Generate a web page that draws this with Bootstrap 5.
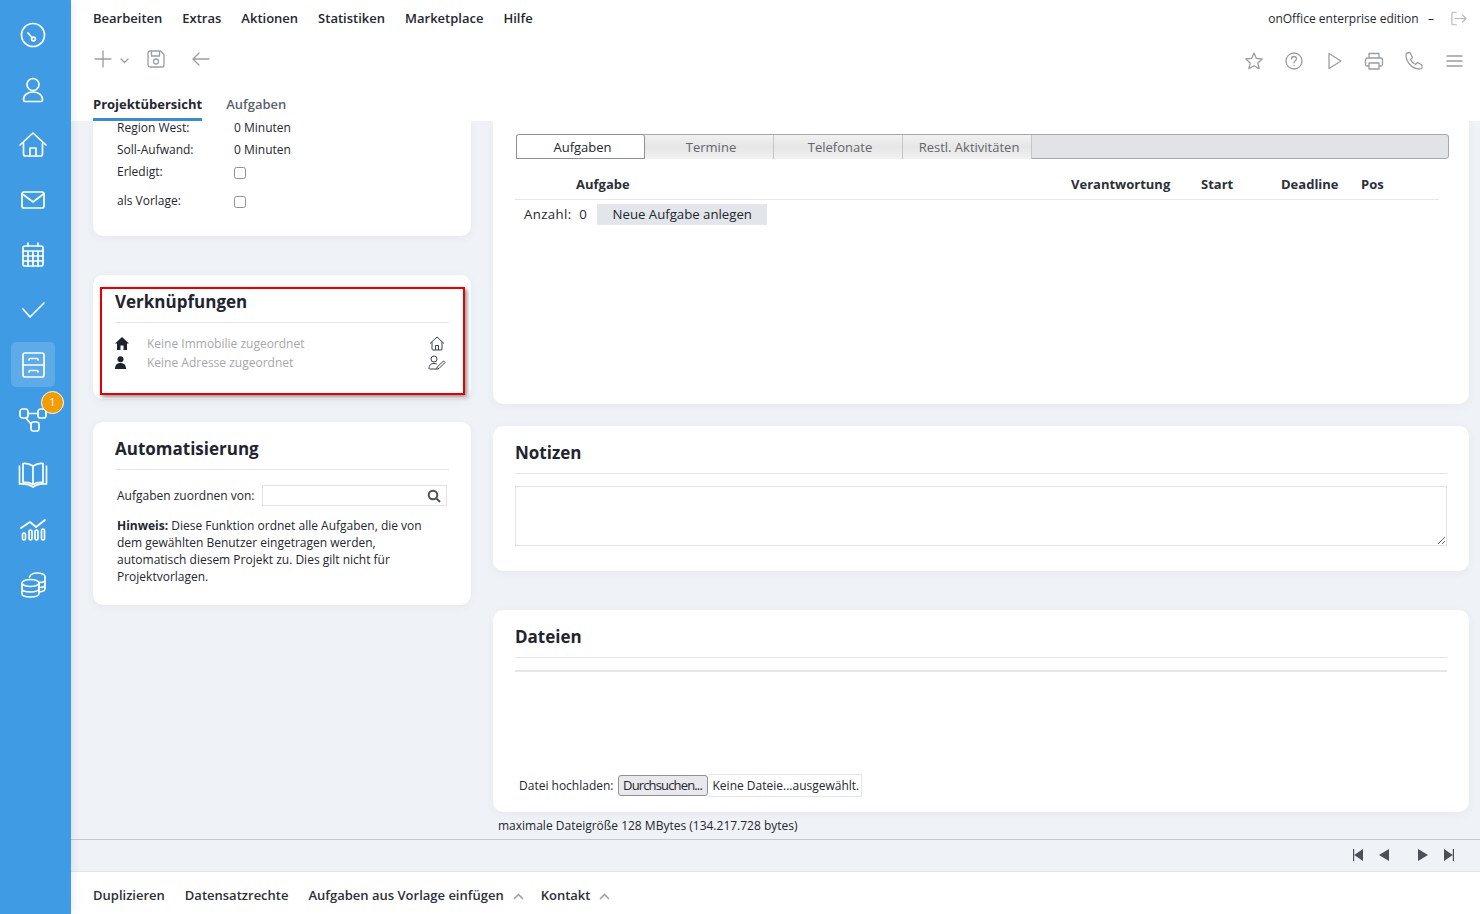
<!DOCTYPE html>
<html lang="de"><head><meta charset="utf-8"><title>Projekt</title>
<link href="https://cdn.jsdelivr.net/npm/bootstrap@5.3.0/dist/css/bootstrap.min.css" rel="stylesheet">
<style>
html,body{height:100%;overflow:hidden}
body{font-family:"Open Sans",sans-serif;font-size:13px;color:#23272f;background:#eff2f6;line-height:17px}
.shell{height:914px}
.side{width:71px;background:#3f9be3;flex:none;padding-top:7px;box-shadow:2px 0 8px rgba(60,70,90,.10);z-index:2}
.side-item{height:55px;position:relative;padding:13px 0 0 18px}
.side-item svg{fill:none;stroke:#fff;stroke-width:1.7;stroke-linecap:round;stroke-linejoin:round;position:relative;display:block}
.side-item.on::before{content:"";position:absolute;left:11px;top:5px;width:44px;height:45px;border-radius:5px;background:#5dabe8}
.pip{position:absolute;left:41px;top:-1px;width:23px;height:23px;border-radius:50%;background:#f29c06;border:1.5px solid #fff;color:#fff;font-size:11px;line-height:20px;text-align:center}
.head{height:121px;background:#fff;flex:none;padding-left:22px}
.menu-row{height:36px;padding-right:13px}
.menu-row a,.foot a,.tabtop a{color:inherit;text-decoration:none}
.menu-item{font-weight:600;color:#2b3038;margin-right:20px;font-size:13px}
.ed{font-size:12px;margin-right:17px}
.tool-row{height:46px;padding-right:16px;padding-left:1px}
.tool-row svg,.menu-row svg{fill:none;stroke:#9a9da6;stroke-width:1.3;stroke-linecap:round;stroke-linejoin:round;display:block}
.right-tools{gap:20px;margin-top:4px}
.tabtop{height:39px;gap:24px}
.tabtop a{font-weight:600;color:#5b616b;padding-top:14px;height:39px}
.tabtop a.act{color:#23272f;font-weight:700;border-bottom:3px solid #3a8ccf}
.scroller{flex:1 1 auto;min-height:0;overflow:hidden;padding-left:22px;padding-right:11px;gap:22px}
.lcol{width:378px;flex:none}
.rcol{flex:1 1 auto;min-width:0}
.pane{background:#fff;border-radius:10px;box-shadow:0 2px 10px rgba(60,70,90,.06);position:relative}
.pane.cut{border-radius:0 0 10px 10px}
.ttl{font-size:17px;font-weight:700;color:#1f2530;line-height:22px;margin:0;padding:0 0 9px;border-bottom:1px solid #e3e5e9}
.kv{font-size:12px;color:#23272f;height:22px;padding-left:24px;align-items:center}
.kv.first{height:14px;line-height:14px;margin-bottom:3px}
.kv .k{width:117px}
.cb{width:12px;height:12px;border:1px solid #8f8f9d;border-radius:2.5px;background:#fff;display:block;margin-top:2px}
.muted-row{color:#a5a7ab;font-size:12px;height:19px}
.redbox{position:absolute;left:7px;top:12px;width:365px;height:108px;border:2px solid #e60000;box-shadow:2px 2px 4px rgba(0,0,0,.45);pointer-events:none}
.zuord{font-size:12px;padding-left:2px}
.finput{width:185px;height:21px;border:1px solid #e0e2e6;position:relative;margin-right:2px}
.hint{font-size:12px;line-height:17px;padding-left:2px;margin:0;max-width:318px}
.strip{height:25px;border:1px solid #a6a8ab;border-radius:3px;background:#e1e3e6;margin-left:23px;margin-right:20px}
.stab{width:129px;height:24px;padding-left:4px;text-align:center;line-height:24px;color:#62666c;border-right:1px solid #c4c6c9;background:linear-gradient(#f1f1f1,#e6e6e6 50%,#f1f1f1)}
.stab.act{background:#fff;color:#23272f;border:1px solid #8e9094;border-radius:3px 3px 0 0;margin:-1px 0 -1px -1px;height:25px}
.thead{height:24px;margin:17px 30px 0 22px;border-bottom:1px solid #e3e5e9;color:#2b3038;font-size:13px}
.thead span{display:block;flex:none;font-weight:700}
.cnt{font-size:13.2px;letter-spacing:.4px}
.new-task{background:#e2e5ea;border:0;font-size:13.2px;letter-spacing:0;height:21px;width:170px;padding:0;color:#23272f;margin-left:10px}
.nt{width:932px;height:60px;border:1px solid #e0e2e6;display:block;margin-top:12px;outline:0}
.doub{height:2px;background:#e4e6ea;margin-top:12px}
.browse{height:21px;width:90px;border:1px solid #8f8f9d;border-radius:3px;background:#e9e9ed;font-size:13px;letter-spacing:-.85px;padding:0;color:#23272f}
.fname{border:1px solid #e4e6ea;border-left:0;height:23px;width:154px;line-height:21px;padding-left:5px;white-space:nowrap;font-size:12px}
.maxs{font-size:12px;padding:5px 0 0 5px;line-height:17px}
.navbar-b{height:33px;flex:none;border-top:1px solid #c6cacf;border-bottom:1px solid #e3e5e9;background:#eff2f6;padding:0 26px 2px 0}
.navbar-b svg{fill:#4a4f58;display:block}
.foot{height:42px;flex:none;background:#fff;padding:4px 0 0 22px;font-weight:600;gap:20px;color:#2b3038}
.foot svg{fill:none;stroke:#9a9da6;stroke-width:1.5;margin:3px 0 0 9px}
</style></head><body>
<div class="shell d-flex">
<nav class="side">
<div class="side-item"><svg width="30" height="30" viewBox="0 0 30 30"><circle cx="15" cy="15" r="11.5"/><path d="M10 13l4 4.500"/><circle cx="15.500" cy="19" r="1.900"/></svg></div>
<div class="side-item"><svg width="30" height="30" viewBox="0 0 30 30"><circle cx="15" cy="9.500" r="6"/><path d="M5.500 25c0-5 4-8 9.500-8s9.500 3 9.500 8c0 1-.5 1.500-1.500 1.500H7c-1 0-1.500-.5-1.500-1.500z"/></svg></div>
<div class="side-item"><svg width="30" height="30" viewBox="0 0 30 30"><path d="M2 15L15 3l13 12M5.500 13v11a2 2 0 0 0 2 2h15a2 2 0 0 0 2-2V13"/><path d="M12 26v-8h6v8"/></svg></div>
<div class="side-item"><svg width="30" height="30" viewBox="0 0 30 30"><rect x="4" y="7" width="22" height="16" rx="2"/><path d="M4.500 9L15 17 25.500 9"/></svg></div>
<div class="side-item"><svg width="30" height="30" viewBox="0 0 30 30"><rect x="5" y="6" width="20" height="20" rx="2"/><path d="M5 11h20M5 16h20M5 21h20M10 11v15M15 11v15M20 11v15M10 3v3M20 3v3"/></svg></div>
<div class="side-item"><svg width="30" height="30" viewBox="0 0 30 30"><path d="M5 14l7 8L26 8"/></svg></div>
<div class="side-item on"><svg width="30" height="30" viewBox="0 0 30 30"><rect x="5" y="3" width="21" height="24" rx="2"/><path d="M5 15h21M11 10c0-1 .5-1.500 1-1.500h7c.5 0 1 .5 1 1.500M11 22c0-1 .5-1.500 1-1.500h7c.5 0 1 .5 1 1.500"/></svg></div>
<div class="side-item"><svg width="30" height="30" viewBox="0 0 30 30"><rect x="2" y="4" width="8" height="9" rx="2.500"/><rect x="20" y="4" width="8" height="9" rx="2.500"/><rect x="13" y="17" width="8" height="9" rx="2.500"/><path d="M10 8.500h10M8 13l5 6"/></svg><span class="pip">1</span></div>
<div class="side-item"><svg width="30" height="30" viewBox="0 0 30 30"><path d="M15 6C12 4 8 3 5 3.500v19C8 22 12 22.500 15 24.500c3-2 7-2.500 10-2v-19C22 3 18 4 15 6zM15 6v18.500"/><path d="M1.500 6v18c4.500-.5 9.500 0 13.500 3 4-3 9-3.500 13.500-3V6"/></svg></div>
<div class="side-item"><svg width="30" height="30" viewBox="0 0 30 30"><path d="M3 13l9-6 6 5 9-7"/><rect x="4.500" y="18" width="3" height="7" rx="1.500"/><rect x="11" y="15" width="3" height="10" rx="1.500"/><rect x="17" y="15" width="3" height="10" rx="1.500"/><rect x="23.500" y="14" width="3" height="11" rx="1.500"/></svg></div>
<div class="side-item"><svg width="30" height="30" viewBox="0 0 30 30"><ellipse cx="12.500" cy="13" rx="8.500" ry="3.500"/><path d="M4 13v10.500c0 2 3.500 3.500 8.500 3.500s8.500-1.500 8.500-3.500V13M4 18.500c0 2 3.500 3.500 8.500 3.500s8.500-1.500 8.500-3.500"/><path d="M11.500 7c1-2.500 4-4 7.500-4 4.500 0 8 1.500 8 3.500V19c0 1.500-2 2.500-6 3M21 12.500c3 0 6-1 6-2.500M21 17.500c3 0 6-1 6-2.500"/></svg></div>
</nav>
<div class="flex-grow-1 d-flex flex-column" style="min-width:0">
<header class="head">
<div class="menu-row d-flex align-items-center">
<a class="menu-item" href="#">Bearbeiten</a><a class="menu-item" href="#">Extras</a><a class="menu-item" href="#">Aktionen</a><a class="menu-item" href="#">Statistiken</a><a class="menu-item" href="#">Marketplace</a><a class="menu-item" href="#">Hilfe</a>
<span class="ms-auto ed">onOffice enterprise edition&nbsp;&nbsp; –</span>
<svg width="16" height="15" viewBox="0 0 18 16" style="stroke:#b5b8be"><path d="M6 1H2.500A1.500 1.500 0 0 0 1 2.500v11A1.500 1.500 0 0 0 2.500 15H6M5 8h12M13 4l4 4-4 4"/></svg>
</div>
<div class="tool-row d-flex align-items-center">
<svg width="18" height="18" viewBox="0 0 18 18" style="margin-right:8px"><path d="M9 1v16M1 9h16"/></svg>
<svg width="9" height="6" viewBox="0 0 9 6" style="margin-right:18px;margin-top:4px"><path d="M1 1l3.500 3.500L8 1"/></svg>
<svg width="18" height="18" viewBox="0 0 18 18" style="margin-right:27px"><path d="M2.500 1h11L17 4.500V15a2 2 0 0 1-2 2H3a2 2 0 0 1-2-2V3a2 2 0 0 1 1.500-2zM4.500 1v5h8V1"/><circle cx="9" cy="11.500" r="2.500"/></svg>
<svg width="18" height="14" viewBox="0 0 18 14"><path d="M7 1L1 7l6 6M1 7h16"/></svg>
<div class="ms-auto d-flex right-tools">
<svg width="20" height="20" viewBox="0 0 20 20"><path d="M10 2l2.400 5.400 5.800.6-4.400 3.900 1.300 5.800L10 14.700l-5.100 3 1.300-5.800L1.800 8l5.800-.6z"/></svg>
<svg width="20" height="20" viewBox="0 0 20 20"><circle cx="10" cy="10" r="8"/><path d="M7.500 8c0-1.500 1-2.500 2.500-2.500s2.500 1 2.500 2.300c0 2-2.500 2-2.500 4M10 14.300v.3"/></svg>
<svg width="20" height="20" viewBox="0 0 20 20"><path d="M5 2.500v15L17 10z"/></svg>
<svg width="20" height="20" viewBox="0 0 20 20"><path d="M5 7V2.500h10V7M5 15H3a1.500 1.500 0 0 1-1.500-1.500V9A2 2 0 0 1 3.500 7h13a2 2 0 0 1 2 2v4.500A1.500 1.500 0 0 1 17 15h-2M5 12h10v6H5z"/></svg>
<svg width="20" height="20" viewBox="0 0 20 20"><path d="M3 2l3-.5 2.500 5L6.500 8.500c1 2.500 2.500 4 5 5l2-2 4.500 2.500v3c-.5 1-1.500 1-3 1C8 17.500 2 11 2 4c0-1 .3-1.500 1-2z"/></svg>
<svg width="20" height="20" viewBox="0 0 20 20"><path d="M3 5h15M3 10h15M3 15h15"/></svg>
</div>
</div>
<div class="tabtop d-flex"><a class="act" href="#">Projektübersicht</a><a href="#">Aufgaben</a></div>
</header>
<main class="scroller d-flex">
<div class="lcol d-flex flex-column">
<section class="pane cut" style="height:115px">
<div class="kv first d-flex"><span class="k">Region West:</span><span>0 Minuten</span></div>
<div class="kv d-flex"><span class="k">Soll-Aufwand:</span><span>0 Minuten</span></div>
<div class="kv d-flex" style="height:23px"><span class="k">Erledigt:</span><span class="cb"></span></div>
<div class="kv d-flex" style="height:35px"><span class="k">als Vorlage:</span><span class="cb"></span></div>
</section>
<section class="pane" style="height:124px;margin-top:39px;padding:16px 22px 0">
<h2 class="ttl">Verknüpfungen</h2>
<div class="muted-row d-flex align-items-center" style="margin-top:11px">
<svg width="14" height="13" viewBox="0 0 14 13" style="margin-right:18px;fill:#1d2430"><path d="M7 0L0 6.500h2V13h3.500V8.500h3V13H12V6.500h2z"/></svg>Keine Immobilie zugeordnet
<svg class="ms-auto" width="16" height="15" viewBox="0 0 16 15" style="fill:none;stroke:#3a3f48;stroke-width:1;margin-right:4px"><path d="M1 7.500L8 1l7 6.500M3 6v7a1 1 0 0 0 1 1h8a1 1 0 0 0 1-1V6M6.500 14V9.500h3V14"/></svg></div>
<div class="muted-row d-flex align-items-center">
<svg width="11" height="13" viewBox="0 0 11 13" style="margin-right:21px;fill:#1d2430"><circle cx="5.500" cy="3.200" r="3"/><path d="M0 13c0-4 2-6 5.500-6s5.500 2 5.500 6z"/></svg>Keine Adresse zugeordnet
<svg class="ms-auto" width="18" height="15" viewBox="0 0 18 15" style="fill:none;stroke:#3a3f48;stroke-width:1;margin-right:3px"><circle cx="6" cy="4" r="3"/><path d="M1 14c0-4 2-5.500 5-5.500 1.500 0 2.500.3 3 1M1.500 14H8M15.500 6L17 7.500 11 13.500l-2.500.8.700-2.300z"/></svg></div>
<div class="redbox"></div>
</section>
<section class="pane" style="height:183px;margin-top:23px;padding:16px 22px 0">
<h2 class="ttl">Automatisierung</h2>
<div class="zuord d-flex align-items-center" style="margin-top:15px">Aufgaben zuordnen von:<span class="finput ms-auto">
<svg width="14" height="14" viewBox="0 0 14 14" style="position:absolute;right:5px;top:3px;fill:none;stroke:#4b505a;stroke-width:2"><circle cx="6" cy="6" r="4.300"/><path d="M9.500 9.500L13 13"/></svg></span></div>
<p class="hint" style="margin-top:11px"><b style="font-weight:700">Hinweis:</b> Diese Funktion ordnet alle Aufgaben, die von dem gewählten Benutzer eingetragen werden, automatisch diesem Projekt zu. Dies gilt nicht für Projektvorlagen.</p>
</section>
</div>
<div class="rcol d-flex flex-column">
<section class="pane cut" style="height:283px;padding-top:13px">
<div class="strip d-flex">
<div class="stab act">Aufgaben</div><div class="stab">Termine</div><div class="stab">Telefonate</div><div class="stab">Restl. Aktivitäten</div>
</div>
<div class="thead d-flex">
<span style="margin-left:61px;width:495px">Aufgabe</span><span style="width:130px">Verantwortung</span><span style="width:80px">Start</span><span style="width:80px">Deadline</span><span>Pos</span>
</div>
<div class="d-flex align-items-center cnt" style="margin:4px 0 0 31px">Anzahl:&nbsp; 0<button class="new-task" type="button">Neue Aufgabe anlegen</button></div>
</section>
<section class="pane" style="height:145px;margin-top:22px;padding:16px 22px 0">
<h2 class="ttl">Notizen</h2>
<textarea class="nt"></textarea>
</section>
<section class="pane" style="height:202px;margin-top:39px;padding:16px 22px 0">
<h2 class="ttl">Dateien</h2>
<div class="doub"></div>
<div class="d-flex align-items-center" style="margin:102px 0 0 4px;font-size:12px">
<span style="margin-right:4px">Datei hochladen:</span><button class="browse" type="button">Durchsuchen...</button><span class="fname">Keine Dateie...ausgewählt.</span>
</div>
</section>
<div class="maxs">maximale Dateigröße 128 MBytes (134.217.728 bytes)</div>
</div>
</main>
<div class="navbar-b d-flex align-items-center justify-content-end">
<svg width="10" height="12" viewBox="0 0 10 12" style="margin-right:16px"><path d="M0 0h1.200v12H0zM10 0v12L1.200 6z"/></svg>
<svg width="10" height="12" viewBox="0 0 10 12" style="margin-right:29px"><path d="M10 0v12L0 6z"/></svg>
<svg width="10" height="12" viewBox="0 0 10 12" style="margin-right:16px"><path d="M0 0v12l10-6z"/></svg>
<svg width="10" height="12" viewBox="0 0 10 12"><path d="M8.800 0H10v12H8.800zM0 0v12l8.800-6z"/></svg>
</div>
<footer class="foot d-flex align-items-center">
<a href="#">Duplizieren</a><a href="#">Datensatzrechte</a>
<a href="#" class="d-flex align-items-center">Aufgaben aus Vorlage einfügen<svg width="11" height="7" viewBox="0 0 11 7"><path d="M1 6l4.500-4.500L10 6"/></svg></a>
<a href="#" class="d-flex align-items-center" style="margin-left:-3px">Kontakt<svg width="11" height="7" viewBox="0 0 11 7"><path d="M1 6l4.500-4.500L10 6"/></svg></a>
</footer>
</div>
</div>
<script src="https://cdn.jsdelivr.net/npm/bootstrap@5.3.0/dist/js/bootstrap.bundle.min.js"></script>
</body></html>
